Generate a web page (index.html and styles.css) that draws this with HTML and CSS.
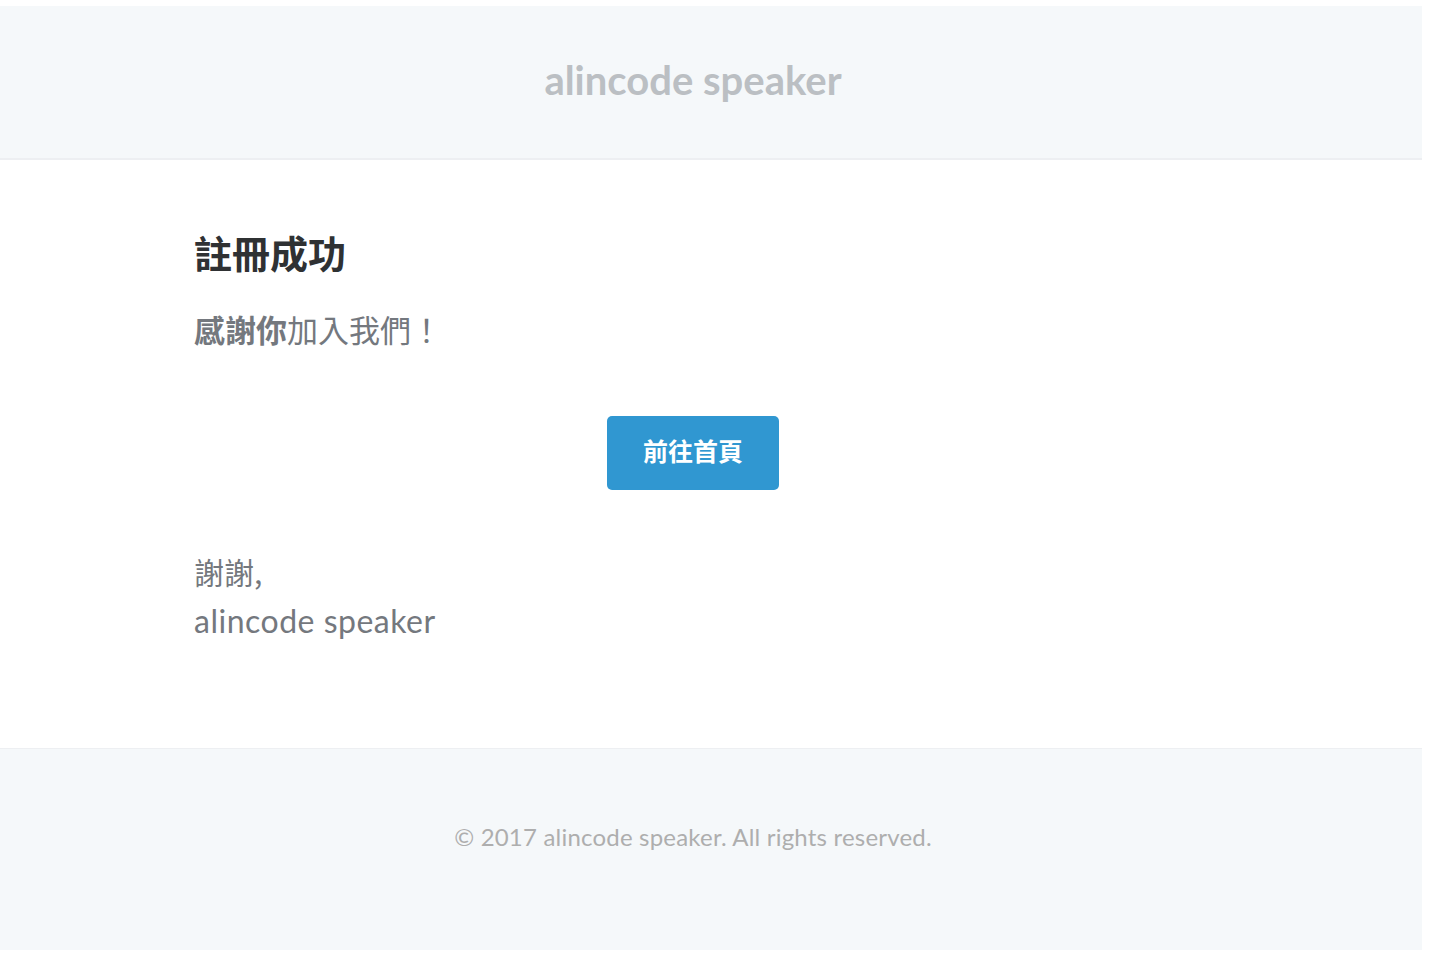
FILE: index.html
```html
<!DOCTYPE html>
<html lang="zh-Hant">
<head>
<meta charset="utf-8">
<title>註冊成功</title>
<link rel="stylesheet" href="styles.css">
</head>
<body>
<div class="page">
  <header class="header">
    <div class="col header-col">
      <a class="brand" href="#">alincode speaker</a>
    </div>
  </header>
  <main class="main">
    <div class="col">
      <h1 class="title">註冊成功</h1>
      <p class="lead"><span class="lead-strong">感謝你</span>加入我們！</p>
      <div class="action">
        <a class="button" href="#">前往首頁</a>
      </div>
      <div class="sign">
        <p class="sign-thanks">謝謝,</p>
        <p class="sign-name">alincode speaker</p>
      </div>
    </div>
  </main>
  <footer class="footer">
    <div class="col footer-col">
      <p class="copy">© 2017 alincode speaker. All rights reserved.</p>
    </div>
  </footer>
</div>
</body>
</html>
```
FILE: styles.css
```css
* { box-sizing: border-box; }
html, body { margin: 0; padding: 0; background: #ffffff; }
body {
  font-family: "Lato", "Noto Sans CJK TC", sans-serif;
  color: #74787e;
}
.page {
  width: 1422px;
  margin: 6px 10px 10px 0;
}
.col {
  width: 998px;
  margin-left: 194px;
}
.header {
  background: #f5f8fa;
  height: 154px;
  border-bottom: 2px solid #edeff2;
  display: flex;
  align-items: center;
}
.header-col { text-align: center; }
.brand {
  font-family: "Lato", sans-serif;
  font-weight: 700;
  font-size: 40px;
  color: #bbbfc3;
  text-decoration: none;
  position: relative;
  top: -2px;
}
.main {
  background: #ffffff;
  padding: 69px 0 103px;
  border-bottom: 1px solid #edeff2;
}
.title {
  margin: 0;
  font-family: "Noto Sans CJK TC", sans-serif;
  font-size: 38px;
  line-height: 46px;
  font-weight: 700;
  color: #2f3133;
}
.lead {
  margin: 31px 0 0;
  font-family: "Noto Sans CJK TC", sans-serif;
  font-size: 31px;
  line-height: 46px;
  color: #74787e;
}
.lead-strong { font-weight: 700; }
.action {
  margin-top: 64px;
  text-align: center;
}
.button {
  display: inline-block;
  background: #3097d1;
  color: #ffffff;
  text-decoration: none;
  font-family: "Noto Sans CJK TC", sans-serif;
  font-weight: 700;
  font-size: 25px;
  line-height: 36px;
  padding: 16px 36px 22px;
  border-radius: 5px;
}
.sign {
  margin-top: 57px;
  color: #74787e;
}
.sign-thanks {
  margin: 0;
  font-family: "Noto Sans CJK TC", sans-serif;
  font-size: 30px;
  line-height: 48px;
}
.sign-name {
  margin: 2px 0 0;
  font-family: "Lato", sans-serif;
  font-size: 32px;
  line-height: 48px;
  letter-spacing: 0.5px;
}
.footer {
  background: #f5f8fa;
  padding: 71px 0 96px;
}
.footer-col { text-align: center; }
.copy {
  margin: 0;
  font-size: 24px;
  line-height: 34px;
  letter-spacing: 0.2px;
  color: #aeaeae;
}
```
